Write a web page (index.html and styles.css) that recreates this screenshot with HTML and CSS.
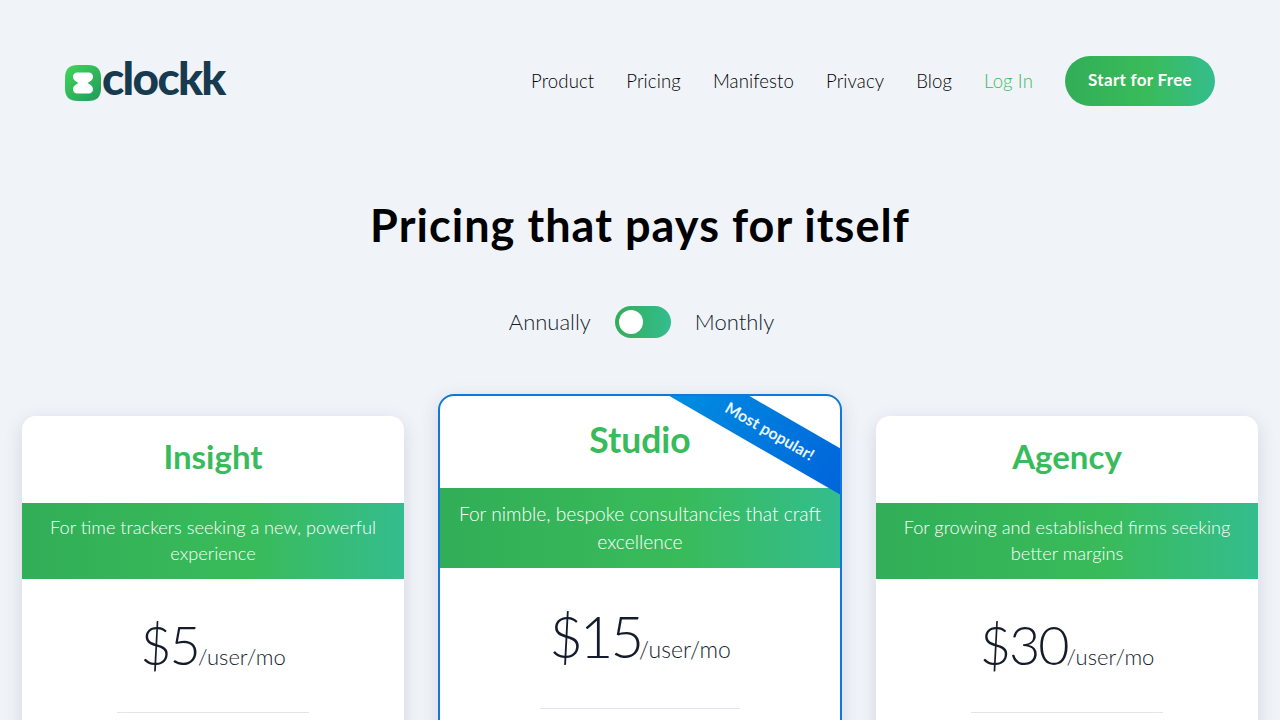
FILE: index.html
```html
<!DOCTYPE html>
<html lang="en">
<head>
    <meta charset="UTF-8">
    <meta name="viewport" content="width=device-width, initial-scale=1.0">
    <title>Clockk Pricing</title>
    <link rel="stylesheet" href="styles.css">
</head>
<body>
    <header class="site-header">
        <a class="logo" href="#">
            <svg class="logo-icon" viewBox="0 0 36 36" width="36" height="36">
                <defs>
                    <linearGradient id="logoFill" x1="0" y1="0" x2="1" y2="1">
                        <stop offset="0" stop-color="#43d659"/>
                        <stop offset="1" stop-color="#1f9a5c"/>
                    </linearGradient>
                </defs>
                <path fill="url(#logoFill)" d="M13 0H23C32 0 36 4 36 13V23C36 32 32 36 23 36H13C4 36 0 32 0 23V13C0 4 4 0 13 0Z"/>
                <path fill="#fff" d="M13 7.5H23C26.5 7.5 28 9.5 28 12C28 15 25 16.5 22.5 18C25 19.5 28 21 28 24C28 26.5 26.5 28.5 23 28.5H13C9.5 28.5 8 26.5 8 24C8 21 11 19.5 13.5 18C11 16.5 8 15 8 12C8 9.5 9.5 7.5 13 7.5Z"/>
            </svg>
            <span class="logo-text">clockk</span>
        </a>
        <nav class="main-nav">
            <a href="#">Product</a>
            <a href="#">Pricing</a>
            <a href="#">Manifesto</a>
            <a href="#">Privacy</a>
            <a href="#">Blog</a>
            <a href="#" class="login-link">Log In</a>
            <a href="#" class="start-button">Start for Free</a>
        </nav>
    </header>

    <h1 class="page-title">Pricing that pays for itself</h1>

    <div class="billing-toggle">
        <span>Annually</span>
        <span class="switch"><span class="knob"></span></span>
        <span>Monthly</span>
    </div>

    <section class="plans">
        <article class="plan">
            <h2>Insight</h2>
            <p class="plan-desc">For time trackers seeking a new, powerful experience</p>
            <div class="plan-price"><span class="amount">$5</span><span class="unit">/user/mo</span></div>
            <hr class="plan-rule">
        </article>

        <article class="plan plan-featured">
            <div class="ribbon">Most popular!</div>
            <h2>Studio</h2>
            <p class="plan-desc">For nimble, bespoke consultancies that craft excellence</p>
            <div class="plan-price"><span class="amount">$15</span><span class="unit">/user/mo</span></div>
            <hr class="plan-rule">
        </article>

        <article class="plan">
            <h2>Agency</h2>
            <p class="plan-desc">For growing and established firms seeking better margins</p>
            <div class="plan-price"><span class="amount">$30</span><span class="unit">/user/mo</span></div>
            <hr class="plan-rule">
        </article>
    </section>
</body>
</html>
```

FILE: styles.css
```css
/* Reset */
* {
    margin: 0;
    padding: 0;
    box-sizing: border-box;
}

html, body {
    height: 720px;
    overflow: hidden;
}

body {
    font-family: 'Lato', 'Open Sans', sans-serif;
    font-weight: 300;
    background-color: #f0f4f9;
    color: #141c2b;
}

a {
    text-decoration: none;
    color: inherit;
}

.site-header {
    display: flex;
    justify-content: space-between;
    align-items: center;
    padding: 56px 65px 0;
}

.logo {
    display: flex;
    align-items: center;
    gap: 1px;
}

.logo-icon {
    display: block;
    margin-top: 4px;
}

.logo-text {
    font-size: 46px;
    font-weight: 900;
    line-height: 50px;
    letter-spacing: -1.7px;
    color: #173a4f;
    margin-top: -6px;
}

.main-nav {
    display: flex;
    align-items: center;
    gap: 32px;
    font-size: 18.6px;
    letter-spacing: 0.1px;
    line-height: 48px;
    color: #000;
}

.login-link {
    color: #38bb5a;
}

.start-button {
    display: block;
    width: 150px;
    height: 50px;
    line-height: 48px;
    text-align: center;
    border-radius: 25px;
    font-size: 17px;
    font-weight: 700;
    letter-spacing: 0.3px;
    color: #fff;
    background: linear-gradient(90deg, #31ae57 0%, #39bb5a 55%, #34bd8e 100%);
}

.page-title {
    margin-top: 90px;
    font-size: 45px;
    line-height: 58px;
    font-weight: 700;
    letter-spacing: 1.05px;
    text-align: center;
    color: #000;
}

.billing-toggle {
    display: flex;
    justify-content: center;
    align-items: center;
    gap: 24px;
    margin-top: 52px;
    padding-left: 3px;
    font-size: 22px;
    line-height: 32px;
}

.switch {
    display: block;
    width: 56px;
    height: 32px;
    padding: 4px;
    border-radius: 16px;
    background: linear-gradient(90deg, #31ae57 0%, #34bd8e 100%);
}

.knob {
    display: block;
    width: 24px;
    height: 24px;
    border-radius: 50%;
    background: #fff;
}

.plans {
    display: flex;
    justify-content: center;
    align-items: flex-start;
    gap: 34px;
    margin-top: 56px;
}

.plan {
    width: 382px;
    height: 500px;
    margin-top: 22px;
    background: #fff;
    border-radius: 14px;
    overflow: hidden;
    box-shadow: 0 5px 18px rgba(60, 70, 90, 0.16);
    text-align: center;
}

.plan h2 {
    height: 87px;
    line-height: 81px;
    font-size: 33px;
    font-weight: 700;
    color: #38bb5a;
}

.plan-desc {
    padding: 11px 24px 13px;
    font-size: 18.2px;
    line-height: 26px;
    color: #fff;
    background: linear-gradient(90deg, #31ae57 0%, #39bb5a 60%, #34bd8e 100%);
}

.plan-price {
    height: 133px;
    padding-top: 32px;
    line-height: 68px;
}

.amount {
    font-size: 54px;
    letter-spacing: -2px;
}

.unit {
    font-size: 22px;
    margin-left: -1px;
}

.plan-rule {
    width: 192px;
    margin: 0 auto;
    border: none;
    border-top: 1px solid #e2e5ea;
}

/* middle card is a bit bigger */
.plan-featured {
    position: relative;
    width: 404px;
    margin-top: 0;
    border: 2px solid #0f78d8;
    border-radius: 16px;
}

.plan-featured h2 {
    height: 92px;
    line-height: 88px;
    font-size: 35.5px;
}

.plan-featured .plan-desc {
    padding: 12px 16px;
    font-size: 19.2px;
    line-height: 28px;
}

.plan-featured .plan-price {
    height: 140px;
    padding-top: 33px;
    line-height: 70px;
}

.plan-featured .amount {
    font-size: 58px;
    letter-spacing: -3px;
}

.plan-featured .unit {
    font-size: 23px;
    margin-left: -2px;
}

.plan-featured .plan-rule {
    width: 200px;
}

.ribbon {
    position: absolute;
    left: 180px;
    top: 15px;
    width: 300px;
    height: 40px;
    line-height: 40px;
    transform: rotate(30deg);
    font-size: 16px;
    font-weight: 700;
    color: #e8f4ff;
    background: linear-gradient(90deg, #0098e2 0%, #0058d9 100%);
}
```
